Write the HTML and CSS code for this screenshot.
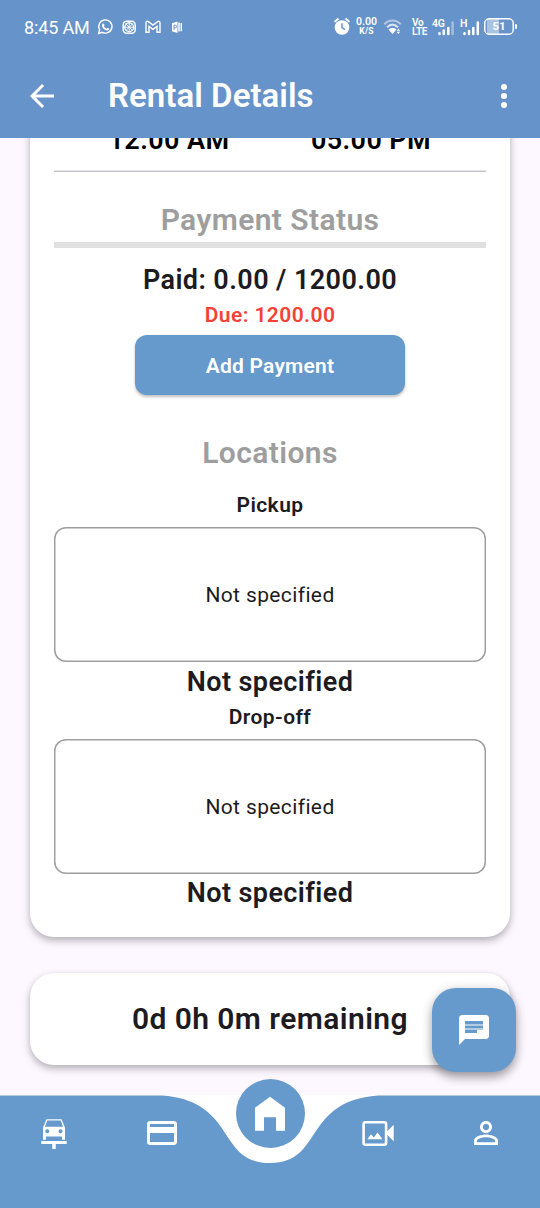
FILE: index.html
```html
<!DOCTYPE html>
<html lang="en">
<head>
<meta charset="utf-8">
<title>Rental Details</title>
<link rel="stylesheet" href="styles.css">
</head>
<body>
<div class="screen">
  <header class="top">
    <div class="status">
      <span class="clock">8:45 AM</span>
      <svg class="notices" width="90" height="20" viewBox="95 17 90 20" fill="none" stroke="#fff">
        <path d="M98.6 33.4l1-3.7a6.6 6.6 0 1 1 2.6 2.6z" stroke-width="1.4"/>
        <path d="M102.6 23.9c.5-.8 1.3-.5 1.5.1l.5 1.3-.7 1c.7 1.3 1.6 2 2.7 2.5l.9-1 1.7.8c.3 1.500-1 2-2 2-3-.4-5.500-3-5.200-5.500z" fill="#fff" stroke="none"/>
        <rect x="123.200" y="21.200" width="12" height="12" rx="3.500" stroke-width="1.500"/>
        <circle cx="129.200" cy="27.200" r="4.400" stroke-width="1.300"/>
        <path d="M129.200 22v10.400M124 27.200h10.400M125.600 23.600l7.200 7.200M132.800 23.600l-7.200 7.200" stroke-width=".9"/>
        <path d="M146 32.300v-9.500c0-1.600 1.500-1.900 2.400-1.200l4.600 3.500 4.600-3.500c.9-.7 2.400-.4 2.400 1.200v9.500h-3v-5.900l-4 3-4-3v5.900z" stroke-width="1.400"/>
        <path d="M172 23.200l5.500-1.700v11.500l-5.500-1.700z" fill="#fff" stroke="none"/>
        <path d="M174 30v-4.800h1.300a1.200 1.200 0 0 1 0 2.600H174" stroke="#6693ca" stroke-width="1"/>
        <path d="M179 22.600v9M181.300 23v8.200" stroke-width="1.500"/>
      </svg>
      <div class="right">
        <svg width="18" height="20" viewBox="333 17 18 20">
          <circle cx="342" cy="27.500" r="7.300" fill="#fff"/>
          <path d="M334.500 22l4-3.500M349.500 22l-4-3.500" stroke="#fff" stroke-width="1.800"/>
          <path d="M342 23.300v4.400l3 2" fill="none" stroke="#6693ca" stroke-width="1.500"/>
        </svg>
        <div class="rate"><span>0.00</span><span class="unit">K/S</span></div>
        <svg class="wifi" width="20" height="20" viewBox="383 17 20 20" fill="none" stroke="#fff" stroke-width="2">
          <path d="M384.300 24.200c4.800-5 11.600-5 16.400 0" opacity=".5"/>
          <path d="M387 27.300c3.400-3.300 7.600-3.300 11 0" opacity=".75"/>
          <path d="M388.500 29.500c2.300-1.900 5.700-1.900 8 0l-4 4.600z" fill="#fff" stroke="none"/>
          <path d="M396.700 30.800l1.700-2.300 1.700 2.300zM396.700 31.800l1.700 2.300 1.700-2.300z" fill="#fff" stroke="none"/>
        </svg>
        <div class="volte"><span>Vo</span><span>LTE</span></div>
        <div class="cell">
          <span>4G</span>
          <svg width="22" height="15" viewBox="0 0 22 15" stroke="#fff" stroke-width="2.500" stroke-linecap="round">
            <path d="M6.500 12.300v.7M10.800 9.500v3.500M15.300 7v6"/><path d="M19.600 1.500V13" opacity=".4"/>
          </svg>
        </div>
        <div class="cell second">
          <span>H</span>
          <svg width="22" height="15" viewBox="0 0 22 15" stroke="#fff" stroke-width="2.500" stroke-linecap="round">
            <path d="M3.500 12.300v.7M8 10v3M12.300 7v6M16.800 1.500V13"/>
          </svg>
        </div>
        <div class="battery"><span>51</span></div>
      </div>
    </div>
    <div class="appbar">
      <svg width="36" height="36" viewBox="0 0 24 24" fill="#fff"><path d="M20 11H7.830l5.590-5.590L12 4l-8 8 8 8 1.410-1.410L7.830 13H20v-2z"/></svg>
      <h1>Rental Details</h1>
      <svg width="36" height="36" viewBox="0 0 24 24" fill="#fff"><circle cx="12" cy="6" r="2"/><circle cx="12" cy="12" r="2"/><circle cx="12" cy="18" r="2"/></svg>
    </div>
  </header>

  <main class="content">
    <section class="card details">
      <div class="times"><span>12.00 AM</span><span>05.00 PM</span></div>
      <svg class="rule" width="432" height="2"><rect y=".5" width="432" height="1.500" fill="#c9c5d0"/></svg>
      <h2>Payment Status</h2>
      <div class="progress"></div>
      <p class="value paid">Paid: 0.00 / 1200.00</p>
      <p class="label due">Due: 1200.00</p>
      <button class="pay">Add Payment</button>
      <h2 class="places">Locations</h2>
      <p class="label pickup">Pickup</p>
      <div class="map">Not specified</div>
      <p class="value">Not specified</p>
      <p class="label drop">Drop-off</p>
      <div class="map second">Not specified</div>
      <p class="value last">Not specified</p>
    </section>
    <section class="card remaining">0d 0h 0m remaining</section>
  </main>

  <button class="fab" aria-label="Chat">
    <svg width="36" height="36" viewBox="0 0 24 24" fill="#fff"><path d="M20 2H4c-1.100 0-1.990.9-1.990 2L2 22l4-4h14c1.100 0 2-.9 2-2V4c0-1.100-.9-2-2-2zM6 9h12v2H6V9zm8 5H6v-2h8v2zm4-6H6V6h12v2z"/><path d="M6 8h12v1H6zM6 11h12v1H6z" fill="#b3cce6"/></svg>
  </button>

  <nav class="nav">
    <svg class="nav-shape" width="540" height="113" viewBox="0 0 540 113"><path fill="#6699cc" d="M0 .5H162C237.600 6.100 216 68 270 68S302.400 6.100 378 .5H540V113H0z"/></svg>
    <div class="items">
      <svg width="36" height="36" viewBox="36 1115 36 36">
        <path fill="#fff" fill-rule="evenodd" d="M46.500 1119.300h15l3.500 8.200v12.300h-3v-3.400H46v3.400h-3v-12.300zM47.300 1120.600l-2.400 6.200h18.200l-2.400-6.200zM47.300 1129.300a2 2 0 1 0 .01 0zM60.500 1129.300a2 2 0 1 0 .01 0zM41.300 1141h25.400v3H55.700v5h-3.400v-5H41.300z"/>
      </svg>
      <svg width="36" height="36" viewBox="0 0 24 24" fill="#fff"><path d="M20 4H4c-1.110 0-1.990.89-1.990 2L2 18c0 1.110.89 2 2 2h16c1.110 0 2-.89 2-2V6c0-1.110-.89-2-2-2zm0 14H4v-6h16v6zm0-10H4V6h16v2z"/></svg>
      <div class="home">
        <svg width="36" height="36" viewBox="252 1095.500 36 36" fill="#fff"><path d="M270 1096.200l15 11v23h-9v-13.400h-12v13.400h-9v-23z"/></svg>
      </div>
      <svg width="36" height="36" viewBox="360 1115 36 36" fill="#fff">
        <rect x="363.600" y="1122.200" width="22.500" height="22.500" rx="2" fill="none" stroke="#fff" stroke-width="2.600"/>
        <path d="M387 1131.500l6.700-6.800v16.600l-6.700-6.800zM367.300 1139.200l3.700-5 2.800 3.300 3.800-5 4.900 6.700z"/>
      </svg>
      <svg width="36" height="36" viewBox="0 0 24 24" fill="#fff"><path d="M12 5.900c1.160 0 2.100.94 2.100 2.100s-.94 2.100-2.100 2.100S9.900 9.160 9.900 8s.94-2.100 2.100-2.100m0 9c2.970 0 6.100 1.460 6.100 2.100v1.100H5.900V17c0-.64 3.130-2.100 6.100-2.100M12 4C9.790 4 8 5.790 8 8s1.790 4 4 4 4-1.790 4-4-1.790-4-4-4zm0 9c-2.670 0-8 1.340-8 4v3h16v-3c0-2.660-5.330-4-8-4z"/></svg>
    </div>
  </nav>
</div>
</body>
</html>
```

FILE: styles.css
```css
* { box-sizing: border-box; margin: 0; }
body { font-family: Roboto, "Liberation Sans", sans-serif; color: #1d1b20; }
svg { display: block; flex: none; }
button { border: 0; padding: 0; font: inherit; color: #fff; background: #6699cc; }

.screen {
  position: relative;
  width: 540px;
  height: 1208px;
  display: flex;
  flex-direction: column;
  background: #fdf7ff;
  overflow: hidden;
}

.top { height: 138px; flex: none; background: #6693ca; color: #fff; }
.status { height: 54px; padding: 0 26px 0 24px; display: flex; align-items: center; }
.clock { width: 71px; font-size: 18px; line-height: 22px; padding-top: 2px; letter-spacing: -.15px; white-space: nowrap; }
.right { margin-left: auto; display: flex; align-items: center; }
.rate, .volte { display: flex; flex-direction: column; align-items: center; font-weight: 600; }
.rate { width: 23px; margin-left: 4px; font-size: 10.5px; line-height: 10px; padding-bottom: 3px; }
.rate .unit { font-size: 8.500px; line-height: 8px; font-weight: 700; letter-spacing: .2px; }
.wifi { margin-left: 5px; }
.volte { width: 16px; margin-left: 9px; font-size: 10px; line-height: 9px; align-items: flex-start; letter-spacing: -.3px; }
.cell { position: relative; width: 22px; margin-left: 5px; padding-top: 2px; }
.cell span { position: absolute; left: -1px; top: -1px; font-size: 10.5px; line-height: 11px; font-weight: 600; letter-spacing: -.3px; }
.cell.second { margin-left: 6px; }
.battery {
  width: 30px; height: 17px; margin: -2px 0 0 1px;
  border: 1.500px solid #fff; border-radius: 5px;
  display: flex; align-items: center; justify-content: center;
  font-size: 11.500px; font-weight: 700; position: relative;
  box-shadow: inset 0 0 0 .5px #fff;
  background: linear-gradient(90deg, transparent 2px, #a9c3e3 2px 14px, transparent 14px);
}
.battery::after { content: ""; position: absolute; right: -4px; top: 5px; width: 2px; height: 5px; background: #fff; border-radius: 1px; }

.appbar { height: 84px; padding: 0 18px 0 24px; display: flex; align-items: center; }
.appbar h1 { flex: 1; margin-left: 48px; font-size: 33px; line-height: 40px; font-weight: 600; letter-spacing: .05px; }

.content { flex: 1; min-height: 0; overflow: hidden; padding: 0 30px; }
.card { background: #fff; border-radius: 24px; box-shadow: 0 4px 8px rgba(0,0,0,.22), 0 2px 6px rgba(0,0,0,.1); }
.details { height: 834.500px; margin-top: -36px; padding: 22px 24px 0; text-align: center; }
.times { display: flex; font-size: 27px; line-height: 32px; font-weight: 600; color: #000; letter-spacing: .4px; margin: 0 14px; }
.times span { flex: 1; }
.rule { margin-top: 14px; }
h2 { margin-top: 30px; font-size: 30px; line-height: 36px; font-weight: 600; letter-spacing: .4px; color: #9e9e9e; }
.progress { height: 6px; margin-top: 4px; background: #e0e0e0; }
.value { font-size: 27px; line-height: 32px; font-weight: 600; letter-spacing: .42px; margin-top: 4px; }
.label { font-size: 21px; line-height: 25px; font-weight: 600; letter-spacing: .42px; }
.paid { margin-top: 16px; }
.due { margin-top: 7px; color: #f44336; }
.pay {
  display: block; width: 270px; height: 60px; margin: 7px auto 0; padding-top: 2px; border-radius: 12px;
  font-size: 21px; font-weight: 600; letter-spacing: .2px;
  box-shadow: 0 2px 3px rgba(0,0,0,.25);
}
.places { margin-top: 40px; }
.pickup { margin-top: 22px; }
.drop { margin-top: 7px; }
.map {
  height: 135px; margin-top: 9px; border-radius: 12px;
  display: flex; align-items: center; justify-content: center;
  font-size: 21px; letter-spacing: .38px;
  box-shadow: inset 0 0 0 1.500px #9e9e9e;
}
.map + .value { margin-top: 4px; }
.map.second { margin-top: 9px; }
.map + .value.last { margin-top: 3px; }
.remaining {
  height: 92.500px; margin-top: 36px;
  display: flex; align-items: center; justify-content: center;
  font-size: 30px; font-weight: 600; letter-spacing: .42px;
}

.fab {
  position: absolute; left: 432px; top: 987.500px; width: 84px; height: 84px;
  border-radius: 24px; display: flex; align-items: center; justify-content: center;
  box-shadow: 0 6px 10px rgba(0,0,0,.28), 0 1px 12px rgba(0,0,0,.14);
}

.nav { position: relative; height: 113px; flex: none; background: #fff; }
.nav-shape { position: absolute; inset: 0; }
.items { position: relative; display: flex; justify-content: space-around; padding-top: 20px; }
.items > svg { margin: 0 36px; }
.home {
  width: 69px; height: 69px; margin: -36px 19.500px 0; flex: none;
  display: flex; align-items: center; justify-content: center;
  background: #6699cc; border-radius: 50%;
}
```
